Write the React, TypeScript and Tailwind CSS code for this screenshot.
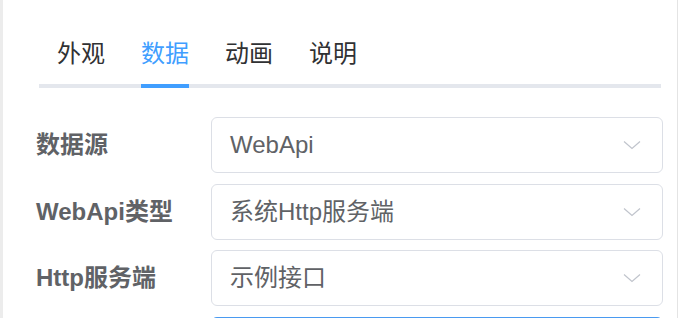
import React from "react";

const tabs = ["外观", "数据", "动画", "说明"];

const rows = [
  { label: "数据源", value: "WebApi", gap: "" },
  { label: "WebApi类型", value: "系统Http服务端", gap: "mt-[11px]" },
  { label: "Http服务端", value: "示例接口", gap: "mt-[10px]" },
];

function Chevron() {
  return (
    <svg width="18" height="10" viewBox="0 0 18 10" fill="none" className="shrink-0">
      <path d="M1 1.5L9 8.5L17 1.5" stroke="#c0c4cc" strokeWidth="1.2" />
    </svg>
  );
}

export default function App() {
  return (
    <div
      className="flex h-[318px] w-[678px] overflow-hidden bg-white"
      style={{ fontFamily: '"Liberation Sans", "Noto Sans CJK SC", sans-serif' }}
    >
      {/* left gutter */}
      <div className="w-[3px] shrink-0 bg-[#ececec]" />

      <div className="flex-1 border-r border-[#e4e4e4]">
        {/* Tabs */}
        <div className="ml-[36px] mr-[16px] pt-[40px]">
          <div className="flex">
            {tabs.map((t, i) => (
              <div key={t} className="relative px-[18px] pb-[16px]">
                <span
                  className={
                    "block text-[24px] leading-[28px] " +
                    (i === 1 ? "text-[#409eff]" : "text-[#303133]")
                  }
                >
                  {t}
                </span>
                {i === 1 && (
                  <div className="absolute bottom-[-4px] left-[18px] right-[18px] z-10 h-[4px] bg-[#409eff]" />
                )}
              </div>
            ))}
          </div>
          <div className="h-[4px] bg-[#e4e7ed]" />
        </div>

        {/* Form */}
        <div className="mt-[29px] flex flex-col pl-[33px] pr-[14px]">
          {rows.map((r) => (
            <div key={r.label} className={"flex items-center " + r.gap}>
              <div className="w-[175px] shrink-0 text-[24px] font-bold text-[#606266]">{r.label}</div>
              <div className="flex h-[56px] flex-1 items-center justify-between rounded-[6px] border border-[#dcdfe6] pl-[18px] pr-[21px]">
                <span className="text-[24px] text-[#606266]">{r.value}</span>
                <Chevron />
              </div>
            </div>
          ))}
          {/* focused input, cut off by the window */}
          <div className="mt-[11px] flex items-center">
            <div className="w-[175px] shrink-0" />
            <div className="h-[56px] flex-1 rounded-[6px] border-2 border-[#4a9af0] bg-white" />
          </div>
        </div>
      </div>
    </div>
  );
}
